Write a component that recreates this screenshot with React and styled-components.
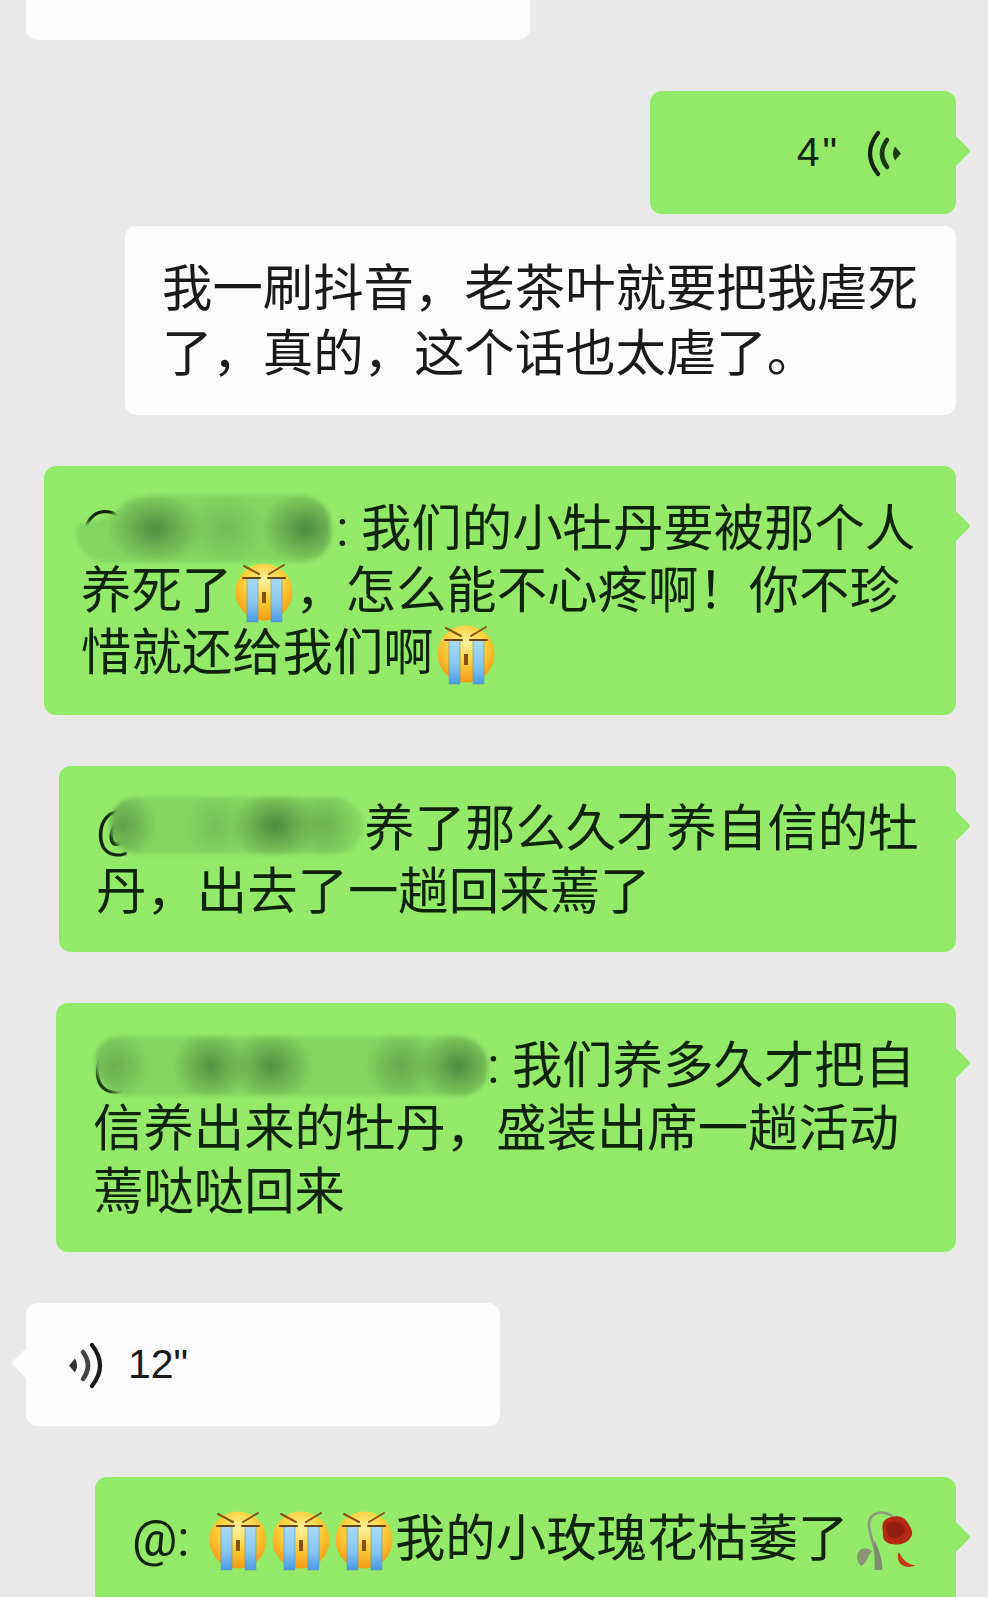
import React from "react";
import styled, { createGlobalStyle } from "styled-components";

const GlobalStyle = createGlobalStyle`
  html, body {
    margin: 0;
    padding: 0;
    background: #e9e9e9;
  }
`;

const Page = styled.div`
  box-sizing: border-box;
  width: 988px;
  height: 1597px;
  padding: 0 32px 0 26px;
  overflow: hidden;
  display: flex;
  flex-direction: column;
  gap: 51px;
  background: #e9e9e9;
  font-family: Roboto, "Noto Sans CJK SC", sans-serif;
`;

const ChatGroup = styled.div`
  display: flex;
  flex-direction: column;
  gap: 12px;
`;

const Bubble = styled.div`
  position: relative;
  box-sizing: border-box;
  flex: none;
  align-self: ${(props) => (props.$mine || props.$end ? "flex-end" : "flex-start")};
  width: ${(props) => props.$width}px;
  padding: ${(props) => props.$pad || "31px 0 29px 37px"};
  border-radius: 12px;
  background: ${(props) => (props.$mine ? "#93ea69" : "#fcfcfc")};
  color: ${(props) => (props.$mine ? "#0e2406" : "#1a1a1a")};
  font-size: 50.4px;
  line-height: ${(props) => props.$lineHeight || 63}px;
  white-space: nowrap;
`;

const TopStub = styled(Bubble)`
  height: 40px;
  padding: 0 0 0 37px;
  overflow: hidden;
  border-radius: 0 0 12px 12px;
`;

const CutOffLine = styled.div`
  margin-top: -55px;
`;

const Tail = styled.span`
  position: absolute;
  top: 48px;
  width: 24px;
  height: 24px;
  border-radius: 3px;
  transform: rotate(45deg);
  background: inherit;
  ${(props) => (props.$left ? "left: -10px;" : "right: -10px;")}
`;

const VoiceRow = styled.div`
  display: flex;
  align-items: center;
  font-family: "Liberation Sans", sans-serif;
  font-size: 41px;
  line-height: 61px;
  letter-spacing: ${(props) => (props.$mine ? 3 : 0)}px;
  justify-content: ${(props) => (props.$mine ? "flex-end" : "flex-start")};
  gap: ${(props) => (props.$mine ? 27 : 25)}px;
`;

const VoiceIcon = styled.svg`
  width: 34px;
  height: 48px;
  flex: none;
  transform: ${(props) => (props.$mine ? "scaleX(-1)" : "none")};
`;

const Prefix = styled.span`
  margin-right: 4px;
`;

const EmojiSvg = styled.svg`
  display: inline-block;
  width: 58px;
  height: 60px;
  margin: -10px 2px -10px 3px;
  vertical-align: -5px;
`;

const RoseSvg = styled.svg`
  display: inline-block;
  width: 62px;
  height: 62px;
  margin: -11px 0 -11px 7px;
  vertical-align: -3px;
`;

// blur sits here so the clip of the smear inside gets soft edges too
const Redact = styled.span`
  display: inline-block;
  position: relative;
  width: ${(props) => props.$width}px;
  height: 0;
  filter: blur(2px);
`;

const Smear = styled.span`
  position: absolute;
  left: ${(props) => props.$left}px;
  top: ${(props) => props.$top}px;
  width: ${(props) => props.$width}px;
  height: ${(props) => props.$height}px;
  border-radius: ${(props) => props.$radius};
  clip-path: ${(props) => props.$clip || "none"};
  background: ${(props) =>
      props.$spots
        .map(
          (s) =>
            `radial-gradient(ellipse ${s[1]}px 36px at ${s[0]}px 50%, rgba(78,136,60,${s[2]}) 0%, rgba(78,136,60,0) 100%)`
        )
        .join(", ")},
    #82d660;
`;

const CryFace = () => (
  <EmojiSvg viewBox="0 0 58 60">
    <defs>
      <radialGradient id="faceFill" cx="50%" cy="30%" r="70%">
        <stop offset="0%" stopColor="#fff2a0" />
        <stop offset="45%" stopColor="#fdd23e" />
        <stop offset="100%" stopColor="#f29a12" />
      </radialGradient>
      <linearGradient id="tearFill" x1="0" y1="0" x2="0" y2="1">
        <stop offset="0%" stopColor="#a8dcf5" />
        <stop offset="60%" stopColor="#82c4f0" />
        <stop offset="100%" stopColor="#4a9ae4" />
      </linearGradient>
    </defs>
    <circle cx="29" cy="29" r="28.500" fill="url(#faceFill)" />
    <rect x="12" y="15" width="11" height="44" fill="url(#tearFill)" stroke="#5f9ab0" strokeWidth="0.600" />
    <rect x="36" y="15" width="11" height="44" fill="url(#tearFill)" stroke="#5f9ab0" strokeWidth="0.600" />
    <path d="M8 15h17M33 15h17" stroke="#6e4210" strokeWidth="2" strokeLinecap="round" />
    <path d="M9 3l15 8M49 2l-15 9" stroke="#8a5412" strokeWidth="2" strokeLinecap="round" />
    <rect x="27" y="29" width="4" height="11" fill="#8a4f10" />
  </EmojiSvg>
);

const WiltedRose = () => (
  <RoseSvg viewBox="220 110 186 186">
    <path d="M291 295C290 255 268 205 262 165C259 130 290 112 330 132" fill="none" stroke="#8f9a7c" strokeWidth="8" strokeLinecap="round" />
    <path d="M279 295h23c0-30-8-55-24-90z" fill="#7f8a6e" />
    <path d="M272 240C250 220 225 235 226 260C228 275 238 285 241 283C256 275 258 250 272 240z" fill="#8c9676" />
    <path d="M306 150C325 130 360 130 374 148C382 160 394 175 391 190C384 212 360 222 335 219C313 217 301 205 304 185C301 170 302 158 306 150z" fill="#b32a12" />
    <path d="M316 158C335 145 362 150 370 172C372 190 350 204 330 198C316 192 310 172 316 158z" fill="#93200e" />
    <path d="M352 242C338 270 365 298 402 282C380 280 364 268 352 242z" fill="#c33a14" />
  </RoseSvg>
);

const Voice = ({ mine }) => (
  <VoiceIcon $mine={mine} viewBox="0 0 34 48">
    <path d="M0 24.500L6 17.500Q10 24.500 6 31.500z" fill={mine ? "#1c3a0c" : "#333"} />
    <path d="M14 11Q24 24.500 14 38" fill="none" stroke={mine ? "#1c3a0c" : "#444"} strokeWidth="4.600" strokeLinecap="round" />
    <path d="M23 4Q39 24.500 23 45" fill="none" stroke={mine ? "#0e2406" : "#1a1a1a"} strokeWidth="4.200" strokeLinecap="round" />
  </VoiceIcon>
);

const App = () => (
  <Page>
    <GlobalStyle />
    <TopStub $width={504}>
      <CutOffLine>的，</CutOffLine>
    </TopStub>
    <ChatGroup>
      <Bubble $mine $width={306} $pad="31px 55px 31px 0">
        <VoiceRow $mine>
          <span>4"</span>
          <Voice mine />
        </VoiceRow>
        <Tail />
      </Bubble>
      <Bubble $end $width={831} $lineHeight={65} $pad="30px 0 29px 37px">
        我一刷抖音，老茶叶就要把我虐死
        <br />
        了，真的，这个话也太虐了。
      </Bubble>
    </ChatGroup>
    <Bubble $mine $width={912} $lineHeight={62} $pad="32px 0 31px 37px">
      @
      <Redact $width={210}>
        <Smear
          $left={-50}
          $top={-51}
          $width={255}
          $height={67}
          $radius="10px 30px 28px 30px"
          $clip="polygon(0 46%, 14% 30%, 20% 6%, 30% 0, 100% 0, 100% 100%, 0 100%)"
          $spots={[
            [79, 48, 0.95],
            [229, 44, 1],
            [150, 40, 0.3],
          ]}
        />
      </Redact>
      : 我们的小牡丹要被那个人
      <br />
      养死了
      <CryFace />
      ，怎么能不心疼啊！你不珍
      <br />
      惜就还给我们啊
      <CryFace />
      <Tail />
    </Bubble>
    <Bubble $mine $width={897}>
      @
      <Redact $width={223}>
        <Smear
          $left={-31}
          $top={-49}
          $width={253}
          $height={57}
          $radius="26px 30px 28px 28px"
          $spots={[
            [13, 34, 0.7],
            [165, 44, 1],
            [105, 30, 0.25],
            [215, 30, 0.45],
          ]}
        />
      </Redact>
      养了那么久才养自信的牡
      <br />
      丹，出去了一趟回来蔫了
      <Tail />
    </Bubble>
    <Bubble $mine $width={900}>
      @
      <Redact $width={349}>
        <Smear
          $left={-43}
          $top={-47}
          $width={393}
          $height={60}
          $radius="24px 30px 26px 34px"
          $spots={[
            [20, 34, 0.5],
            [116, 38, 0.9],
            [176, 42, 0.9],
            [306, 36, 0.6],
            [363, 40, 1],
          ]}
        />
      </Redact>
      : 我们养多久才把自
      <br />
      信养出来的牡丹，盛装出席一趟活动
      <br />
      蔫哒哒回来
      <Tail />
    </Bubble>
    <Bubble $width={474} $pad="31px 0 31px 43px">
      <VoiceRow>
        <Voice />
        <span>12"</span>
      </VoiceRow>
      <Tail $left />
    </Bubble>
    <Bubble $mine $width={861} $lineHeight={62}>
      <Prefix>@: </Prefix>
      <CryFace />
      <CryFace />
      <CryFace />
      我的小玫瑰花枯萎了
      <WiltedRose />
      <br />
      <br />
      <Tail />
    </Bubble>
  </Page>
);

export default App;
